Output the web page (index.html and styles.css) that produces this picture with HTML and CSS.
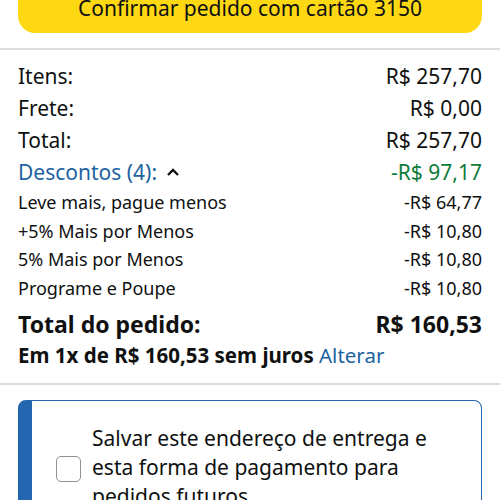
FILE: index.html
```html
<!DOCTYPE html>
<html>
<head>
  <title>Resumo do pedido</title>
  <link rel="stylesheet" href="styles.css">
</head>
<body>

  <div class="top">
    <button class="confirm-btn">Confirmar pedido com cartão 3150</button>
  </div>

  <div class="divider"></div>

  <div class="summary">
    <div class="row"><span>Itens:</span><span>R$ 257,70</span></div>
    <div class="row"><span>Frete:</span><span>R$ 0,00</span></div>
    <div class="row"><span>Total:</span><span>R$ 257,70</span></div>
    <div class="row">
      <span class="link">Descontos (4):
        <svg class="chevron" width="14" height="10" viewBox="0 0 14 10">
          <polyline points="2,8 7,3 12,8" fill="none" stroke="#0f1111" stroke-width="2.4"/>
        </svg>
      </span>
      <span class="green">-R$ 97,17</span>
    </div>
    <div class="sub-row"><span>Leve mais, pague menos</span><span>-R$ 64,77</span></div>
    <div class="sub-row"><span>+5% Mais por Menos</span><span>-R$ 10,80</span></div>
    <div class="sub-row"><span>5% Mais por Menos</span><span>-R$ 10,80</span></div>
    <div class="sub-row"><span>Programe e Poupe</span><span>-R$ 10,80</span></div>
    <div class="row total-row"><span>Total do pedido:</span><span>R$ 160,53</span></div>
    <div class="installments">Em 1x de R$ 160,53 sem juros <span class="link">Alterar</span></div>
  </div>

  <div class="divider thick"></div>

  <div class="save-card">
    <div class="checkbox"></div>
    <div class="save-text">Salvar este endereço de entrega e esta forma de pagamento para pedidos futuros</div>
  </div>

</body>
</html>
```

FILE: styles.css
```css
body {
  margin: 0;
  font-family: "Noto Sans", "Open Sans", sans-serif;
  color: #0f1111;
  background: #fff;
  overflow: hidden;
}

.top {
  padding: 0 18px;
}

.confirm-btn {
  display: block;
  width: 100%;
  height: 50px;
  margin-top: -17px;
  margin-bottom: 15px;
  padding: 0;
  border: none;
  border-radius: 17px;
  background: #ffd814;
  color: #0f1111;
  font-family: inherit;
  font-size: 21px;
  white-space: nowrap;
}

.divider {
  height: 2px;
  background: #dcdcdc;
}

.divider.thick {
  margin-top: 13px;
}

.summary {
  padding: 10px 18px 0;
}

.row,
.sub-row {
  display: flex;
  justify-content: space-between;
  align-items: center;
}

.row {
  font-size: 21px;
  line-height: 32px;
}

.sub-row {
  font-size: 18px;
  line-height: 28.5px;
}

.link {
  color: #2162a1;
}

.green {
  color: #0f7b3a;
}

.chevron {
  margin-left: 3px;
  vertical-align: 3px;
}

.total-row {
  margin-top: 6px;
  font-size: 23px;
  font-weight: bold;
}

.installments {
  font-size: 20.5px;
  line-height: 30px;
  font-weight: bold;
  white-space: nowrap;
}

.installments .link {
  font-weight: normal;
}

/* card with blue accent bar */
.save-card {
  display: flex;
  align-items: center;
  gap: 11px;
  margin: 15px 18px 0;
  padding: 23px 22px 20px 24px;
  border: 1.5px solid #2466b0;
  border-left: 14px solid #2466b0;
  border-radius: 8px;
}

.checkbox {
  flex: none;
  width: 23px;
  height: 24px;
  border: 1.5px solid #8d9096;
  border-radius: 5px;
  margin-top: 2px;
}

.save-text {
  width: 355px;
  font-size: 21px;
  line-height: 29px;
}
```
